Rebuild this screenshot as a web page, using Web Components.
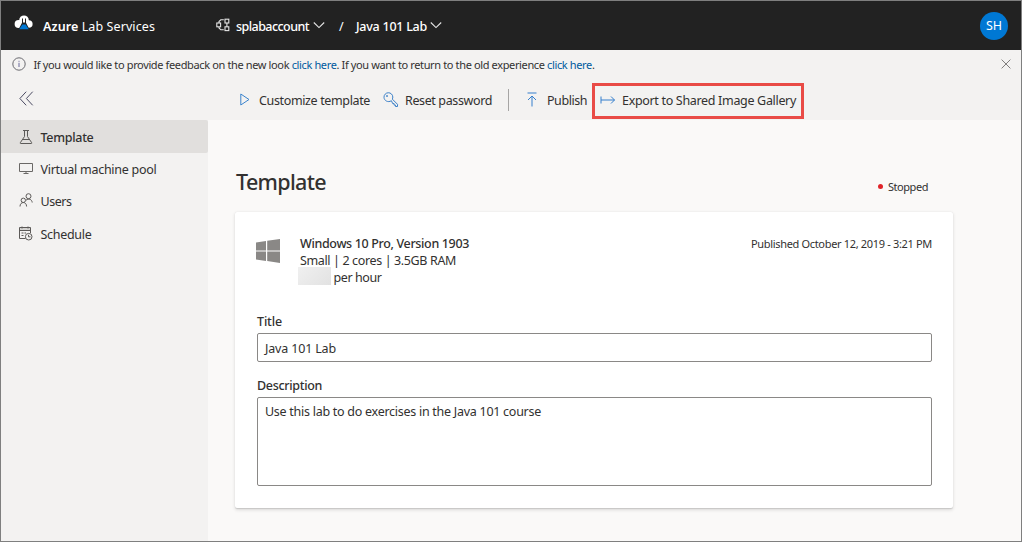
<!DOCTYPE html>
<html lang="en">
<head>
<meta charset="utf-8">
<title>Azure Lab Services</title>
<style>
html,body{margin:0;height:100%;overflow:hidden}
body{font-family:"Noto Sans","Open Sans",sans-serif;font-size:12.5px;color:#323130}
</style>
</head>
<body>
<lab-app></lab-app>
<script>
const define = (name, html, setup) => {
  const template = document.createElement('template');
  template.innerHTML = html;
  customElements.define(name, class extends HTMLElement {
    connectedCallback() {
      if (this.shadowRoot) return;
      this.attachShadow({ mode: 'open' }).append(template.content.cloneNode(true));
      if (setup) setup(this, this.shadowRoot);
    }
  });
};

const icons = {
  cloud: [20, 18, `<circle cx="4.600" cy="10" r="4" fill="#fff"/><circle cx="14.800" cy="10" r="3.800" fill="#fff"/><circle cx="10" cy="6.200" r="4.800" fill="#fff"/><path d="M8 4.500v4.200L4.200 16h11.600L12 8.700V4.500z" fill="#222"/><path d="M9 4h2v4.500H9z" fill="#fff"/><path d="M8.300 10.500h3.400l3 4.700H5.300z" fill="#0078d4"/>`],
  account: [14, 14, `<g fill="none" stroke="#e6e6e6" stroke-width="1.1"><rect x=".8" y="5" width="3.800" height="3.800"/><rect x="9" y="1.200" width="3.800" height="3.800"/><rect x="9" y="8.800" width="3.800" height="3.800"/><path d="M10.900 5v3.800M3 5V3.600l1.800-1.800h3M3 9v1l1.800 1.800h3"/></g>`],
  chevron: [12, 8, `<path d="M.8 1.500 6 6.600l5.200-5.100" fill="none" stroke="#e6e6e6" stroke-width="1.100"/>`],
  info: [14, 14, `<circle cx="7" cy="7" r="6.200" fill="none" stroke="#69696f"/><path d="M7 5.800V10M7 3.800v1" stroke="#69699a"/>`],
  close: [10, 10, `<path d="m.6.600 8.800 8.800m0-8.800L.6 9.400" stroke="#73716f" stroke-width=".9"/>`],
  collapse: [15, 15, `<path d="M7.200.700.900 7.500l6.300 6.800M13.700.700 7.400 7.500l6.300 6.800" fill="none" stroke="#4a4a62" stroke-width="1"/>`],
  play: [10, 13, `<path d="M.8 1v11L9 6.500z" fill="none" stroke="#3b84cc"/>`],
  key: [16, 16, `<g fill="none" stroke="#3b80c8" stroke-width="1"><path d="M8.400 8.700C5 11 1 8.500 1 5.300A4.400 4.400 0 0 1 9.800 5c0 .8-.1 1.400-.5 2.100l5.200 5.200v2.200h-2v-1.400h-1.400v-1.500H9.700z"/><circle cx="4" cy="4" r=".5" fill="#3b80c8"/></g>`],
  publish: [12, 15, `<path d="M1.500 1h9M6 14.500V4M2 8l4-4 4 4" fill="none" stroke="#347fcd" stroke-width="1"/>`],
  exportArrow: [16, 10, `<path d="M1 1.500v7M1 5h13.500M11 1.500 14.500 5 11 8.500" fill="none" stroke="#347fcd" stroke-width="1"/>`],
  flask: [14, 16, `<path d="M4 1.500h6M5.500 1.500v6L1.300 13.700q-.4.800.5.800h10.400q.9 0 .5-.8L8.500 7.500v-6M3.500 10.500h7" fill="none" stroke="#5c5a58"/>`],
  monitor: [14, 12, `<path d="M.5 1.500h13v8H.5zM7 9.500v2M4.500 11.500h5" fill="none" stroke="#6a6866"/>`],
  users: [14, 14, `<g fill="none" stroke="#5c5a58"><circle cx="9.500" cy="3.200" r="2.500"/><circle cx="4.300" cy="7.300" r="2.200"/><path d="M1 13.500c0-5.300 6.600-5.300 6.600 0M7 7.300c2.500-2.500 6-.9 6.200 2.200"/></g>`],
  schedule: [15, 15, `<g fill="none" stroke="#5c5a58"><path d="M7.500 12.500h-6v-11h11V7M1.500 4.500h11M4 .500v2M10 .500v2M3.500 7h2M6.500 7H8M3.500 9.500h2"/><path d="M2 3h10" stroke-opacity=".4"/><circle cx="10.700" cy="10.700" r="3.300"/><path d="M10.500 8.800v2h2"/></g>`],
  windows: [24, 24, `<path d="M0 3.600 10 2v9.400H0zM11.200 1.800 24 0v11.400H11.200zM0 12.600h10V22L0 20.500zM11.200 12.600H24V24l-12.800-1.900z" fill="#8a8886"/>`]
};

define('lab-header', `
<style>
:host{display:flex;align-items:center;height:49px;box-sizing:border-box;padding:1px 13px 0 15px;background:#222;color:#fff}
b{font-weight:600}
lab-icon[name=cloud]{margin:-6px 9px 0 -2px}
.account{margin:-2px 6px 0 61px}
.chev{margin:-3px 0 0 4px}
.slash{margin:0 11px 0 14px}
.avatar{margin:-1px 0 0 auto;width:28px;height:28px;border-radius:50%;background:#0078d4;display:flex;align-items:center;justify-content:center;font-size:12.5px}
</style>
<lab-icon name="cloud"></lab-icon><fit-text w="112"><b>Azure</b> Lab Services</fit-text>
<lab-icon class="account" name="account"></lab-icon><fit-text w="73" style="font-weight:500">splabaccount</fit-text><lab-icon class="chev" name="chevron"></lab-icon>
<fit-text class="slash" w="6">/</fit-text><fit-text w="71" style="font-weight:500">Java 101 Lab</fit-text><lab-icon class="chev" style="margin-left:3px" name="chevron"></lab-icon>
<div class="avatar">SH</div>`);

define('lab-message', `
<style>
:host{display:flex;align-items:center;height:28px;padding:0 10px 0 11px;font-size:11px}
lab-icon[name=info]{margin-right:7.500px}
lab-icon[name=close]{margin-left:auto}
a{color:#005a9e}
</style>
<lab-icon name="info"></lab-icon>
<fit-text w="561">If you would like to provide feedback on the new look <a>click here</a>. If you want to return to the old experience <a>click here</a>.</fit-text>
<lab-icon name="close"></lab-icon>`);

define('lab-command', `
<style>:host{display:flex;align-items:center;height:36px;box-sizing:border-box}lab-icon{margin-top:-2px}fit-text{margin-left:var(--gap,8px)}</style>
<lab-icon></lab-icon><fit-text><slot></slot></fit-text>`, (host, root) => {
  root.querySelector('lab-icon').setAttribute('name', host.getAttribute('icon'));
  root.querySelector('fit-text').setAttribute('w', host.getAttribute('w'));
});

define('lab-toolbar', `
<style>
:host{display:flex;align-items:center;height:42px;box-sizing:border-box;padding:3px 0 0 18px}
.play{margin-left:206px;--gap:9px}
.key{margin-left:13px;--gap:6px}
.sep{width:1px;height:22px;background:#a6a5a4;margin:-1px 17px 0 16px}
.pub{--gap:9px}
.exp{border:3px solid #e94b46;margin-left:5px;padding:0 5px;--gap:6px}
</style>
<lab-icon name="collapse" style="margin-top:-4px"></lab-icon>
<lab-command class="play" icon="play" w="111">Customize template</lab-command>
<lab-command class="key" icon="key" w="87">Reset password</lab-command>
<div class="sep"></div>
<lab-command class="pub" icon="publish" w="40">Publish</lab-command>
<lab-command class="exp" icon="exportArrow" w="174">Export to Shared Image Gallery</lab-command>`);

define('nav-item', `
<style>
:host{display:flex;align-items:center;height:32.300px;box-sizing:border-box;padding-left:17px}
:host([selected]){background:#e1dfdd;height:33px;font-weight:500;border-radius:0 2px 2px 0;padding-top:2px}
.i{width:15px;display:flex;justify-content:center;margin:-2px 7.500px 0 0}
</style>
<div class="i"><lab-icon></lab-icon></div><fit-text><slot></slot></fit-text>`, (host, root) => {
  root.querySelector('lab-icon').setAttribute('name', host.getAttribute('icon'));
  root.querySelector('fit-text').setAttribute('w', host.getAttribute('w'));
});

define('lab-nav', `
<style>:host{display:block;width:207px;flex:none;background:#f3f2f1}</style>
<nav-item selected icon="flask" w="53">Template</nav-item>
<nav-item icon="monitor" w="116">Virtual machine pool</nav-item>
<nav-item icon="users" w="31">Users</nav-item>
<nav-item icon="schedule" w="51" style="padding-top:1px">Schedule</nav-item>`);

define('lab-field', `
<style>
:host{display:block}
.label{display:block;font-weight:500;line-height:18px;height:20px}
.box{height:var(--h);box-sizing:border-box;border:1px solid #8a8886;border-radius:2px;padding:var(--p,5px) 7px 0;line-height:18px}
</style>
<div class="label"><fit-text class="l"></fit-text></div><div class="box"><fit-text class="v"><slot></slot></fit-text></div>`, (host, root) => {
  const l = root.querySelector('.l');
  l.textContent = host.getAttribute('label');
  l.setAttribute('w', host.getAttribute('lw'));
  root.querySelector('.v').setAttribute('w', host.getAttribute('w'));
});

define('template-card', `
<style>
:host{display:block;box-sizing:border-box;width:718px;height:296px;background:#fff;border-radius:2px;padding:23px 21px 0 22px;box-shadow:0 1.600px 3.600px rgba(0,0,0,.13),0 .3px .9px rgba(0,0,0,.11)}
.top{display:flex;align-items:flex-start;height:78px;line-height:17px}
lab-icon{margin:4px 20px 0 -1px}
.top>div{flex:1}
.row{display:flex;height:17px;align-items:center}
.mask{width:33px;height:18px;margin:-4px 2.500px 0 -2px;background:linear-gradient(135deg,#f0f0f0,#e2e2e2)}
.date{font-size:11px}
.desc{margin-top:15px}
</style>
<div class="top">
<lab-icon name="windows"></lab-icon>
<div><div class="row" style="font-weight:500"><fit-text w="169">Windows 10 Pro, Version 1903</fit-text></div>
<div class="row"><fit-text w="156">Small | 2 cores | 3.5GB RAM</fit-text></div>
<div class="row"><span class="mask"></span><fit-text w="48">per hour</fit-text></div></div>
<fit-text class="date" w="181">Published October 12, 2019 - 3:21 PM</fit-text>
</div>
<lab-field label="Title" lw="25" w="71" style="--h:29px;--p:6px">Java 101 Lab</lab-field>
<lab-field class="desc" label="Description" lw="65" w="276" style="--h:89px">Use this lab to do exercises in the Java 101 course</lab-field>`);

define('lab-main', `
<style>
:host{display:block;flex:1;background:#faf9f8;padding:46px 0 0 27px}
.head{display:flex;align-items:center;justify-content:space-between;width:693px;height:32px;margin-bottom:14px}
.title{font-size:21.500px;font-weight:500;margin:-2px 0 0 1px}
.status{display:flex;align-items:center;font-size:11px;gap:5px;margin-top:8px}
.dot{width:5px;height:5px;border-radius:50%;background:#e0242a}
</style>
<div class="head"><fit-text class="title" w="90">Template</fit-text><div class="status"><span class="dot"></span><fit-text w="40">Stopped</fit-text></div></div>
<template-card></template-card>`);

define('lab-app', `
<style>
:host{display:flex;flex-direction:column;box-sizing:border-box;width:1022px;height:542px;border:1px solid #7f7f7f;background:#f3f2f1}
.body{display:flex;flex:1}
</style>
<lab-header></lab-header><lab-message></lab-message><lab-toolbar></lab-toolbar>
<div class="body"><lab-nav></lab-nav><lab-main></lab-main></div>`);

/* Defined after its users, which pass the icon name on. */
define('lab-icon', `<style>:host{display:block;flex:none}svg{display:block}</style>`, (host, root) => {
  const [w, h, body] = icons[host.getAttribute('name')];
  root.innerHTML += `<svg width="${w}" height="${h}" viewBox="0 0 ${w} ${h}">${body}</svg>`;
});

/* One-line text whose tracking is adjusted to fill the width given in w. */
define('fit-text', `
<style>:host{display:inline-block;white-space:nowrap;flex:none}</style><span><slot></slot></span>`, (host, root) => {
  const w = Number(host.getAttribute('w'));
  const flat = n => n.nodeName === 'SLOT' ? n.assignedNodes({ flatten: true }).map(x => x.textContent).join('') : n.textContent;
  const text = flat(root.querySelector('slot')).trim();
  const natural = root.querySelector('span').getBoundingClientRect().width;
  host.style.width = w + 'px';
  if (text.length > 1) host.style.letterSpacing = ((w - natural) / text.length).toFixed(3) + 'px';
});
</script>
</body>
</html>
